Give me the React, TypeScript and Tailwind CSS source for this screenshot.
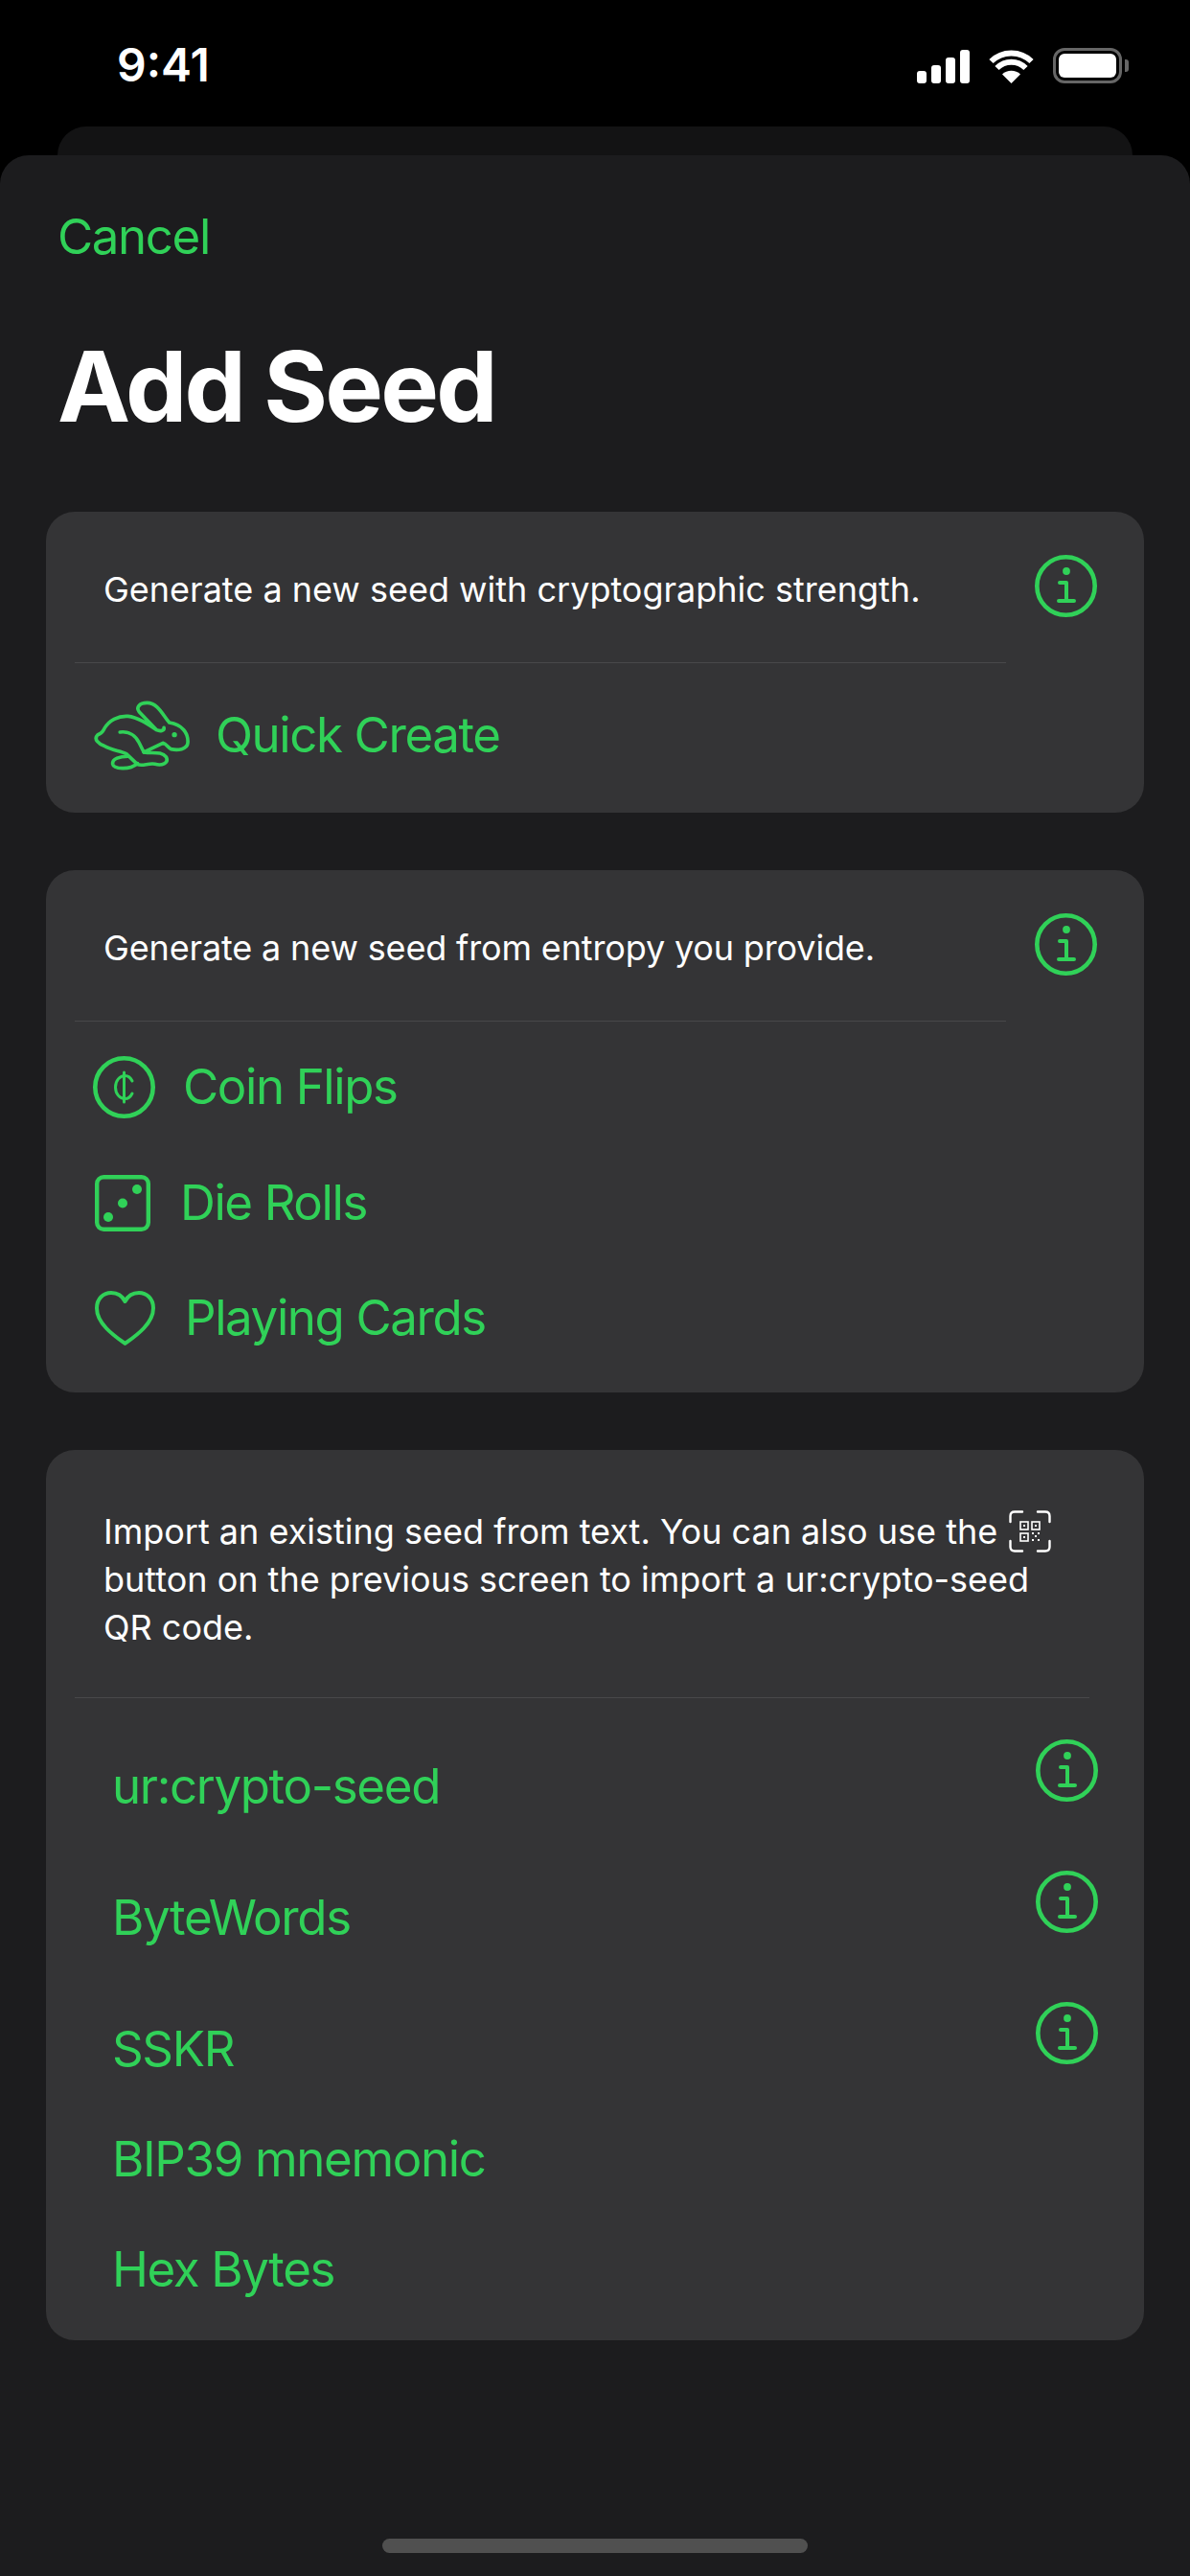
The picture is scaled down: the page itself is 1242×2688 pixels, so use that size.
function InfoIcon({ className = '' }: { className?: string }) {
  return (
    <svg viewBox="0 0 65 65" className={`w-[65px] h-[65px] shrink-0 ${className}`} fill="none" stroke="#30d158">
      <circle cx="32.5" cy="32.5" r="30.2" strokeWidth="4.6" />
      <circle cx="33" cy="17" r="3.9" fill="#30d158" stroke="none" />
      <path d="M26 29H33V48M25 48H41" strokeWidth="4" strokeLinecap="round" strokeLinejoin="round" />
    </svg>
  )
}

function RabbitIcon() {
  return (
    <svg viewBox="105 140 310 225" className="w-[103px] h-[75px] shrink-0" fill="none" stroke="#30d158" strokeWidth="11" strokeLinejoin="round" strokeLinecap="round">
      <path d="M328 228C330 238 316 240 305 235L250 178C240 165 250 150 275 150C310 150 325 190 345 212C385 218 405 245 403 275C402 297 370 300 350 295C340 290 335 278 325 276L265 305C290 310 320 300 335 320C345 340 320 348 300 342C280 338 260 350 245 343L210 310C190 300 165 300 140 285C125 280 105 265 120 250C135 245 135 240 140 232C155 205 185 190 215 192C245 195 275 215 305 235" />
      <path d="M190 242C220 238 240 255 250 275L265 305" />
      <path d="M215 318C190 318 165 325 167 342C170 358 220 362 245 340" />
      <circle cx="361" cy="250" r="8" fill="#30d158" stroke="none" />
    </svg>
  )
}

function CoinIcon() {
  return (
    <svg viewBox="0 0 65 65" className="w-[65px] h-[65px] shrink-0" fill="none" stroke="#30d158">
      <circle cx="32.5" cy="32.5" r="30.2" strokeWidth="4.6" />
      <path d="M41 26C39 22 36 20.500 33.500 20.500C28 20.500 23.500 25.500 23.500 32.500C23.500 39.500 28 44.500 33.500 44.500C36 44.500 39 43 41 39" strokeWidth="3" strokeLinecap="round" />
      <path d="M32.500 17V48" strokeWidth="3" strokeLinecap="round" />
    </svg>
  )
}

function DieIcon() {
  return (
    <svg viewBox="0 0 58 59" className="w-[58px] h-[59px] shrink-0" fill="none">
      <rect x="2.200" y="2.200" width="53.600" height="54.600" rx="7" stroke="#30d158" strokeWidth="4.400" />
      <circle cx="14" cy="44" r="5" fill="#30d158" />
      <circle cx="29" cy="29.500" r="5" fill="#30d158" />
      <circle cx="44" cy="15" r="5" fill="#30d158" />
    </svg>
  )
}

function HeartIcon() {
  return (
    <svg viewBox="0 0 63 58" className="w-[63px] h-[58px] shrink-0" fill="none">
      <path d="M31.500 55C22 48 2 35 2 18C2 8 9 2 17 2C24 2 29 6 31.500 11C34 6 39 2 46 2C54 2 61 8 61 18C61 35 41 48 31.500 55Z" stroke="#30d158" strokeWidth="4" strokeLinejoin="round" />
    </svg>
  )
}

function QrIcon() {
  return (
    <svg viewBox="0 0 44 44" className="inline-block w-[44px] h-[44px] align-[-9px] ml-[12px]" fill="none" stroke="#ffffff">
      <path d="M1.500 12V6C1.500 3 3 1.500 6 1.500H14M30 1.500H38C41 1.500 42.500 3 42.500 6V12M42.500 32V38C42.500 41 41 42.500 38 42.500H30M14 42.500H6C3 42.500 1.500 41 1.500 38V32" strokeWidth="2.400" strokeLinecap="round" />
      <rect x="12" y="12" width="8" height="8" strokeWidth="1.600" />
      <rect x="24" y="12" width="8" height="8" strokeWidth="1.600" />
      <rect x="12" y="24" width="8" height="8" strokeWidth="1.600" />
      <path d="M15 15h2v2h-2zM27 15h2v2h-2zM15 27h2v2h-2zM24 23h2v2h-2zM30 23h2v2h-2zM27 26h2v2h-2zM24 30h2v2h-2zM30 30h2v2h-2z" fill="#ffffff" stroke="none" />
    </svg>
  )
}

function StatusIcons() {
  return (
    <div className="flex items-end">
      <div className="flex items-end gap-[5px]">
        <div className="w-[10px] h-[13px] rounded-[3px] bg-white" />
        <div className="w-[10px] h-[19px] rounded-[3px] bg-white" />
        <div className="w-[10px] h-[27px] rounded-[3px] bg-white" />
        <div className="w-[10px] h-[35px] rounded-[3px] bg-white" />
      </div>
      <svg viewBox="0 0 47 35" className="w-[47px] h-[35px] ml-[20px]" fill="none" stroke="#ffffff">
        <path d="M23.500 35L14 25.500C19 20.500 28 20.500 33 25.500Z" fill="#ffffff" stroke="none" />
        <path d="M8.500 19C17 10.500 30 10.500 38.500 19" strokeWidth="6" />
        <path d="M2.500 12C14 .5 33 .5 44.500 12" strokeWidth="6" />
      </svg>
      <div className="flex items-center ml-[20px]">
        <div className="w-[72px] h-[37px] rounded-[12px] border-[3px] border-[#666666] p-[3px]">
          <div className="w-full h-full rounded-[6px] bg-white" />
        </div>
        <div className="w-[4px] h-[13px] ml-[3px] rounded-r-[3px] bg-[#666666]" />
      </div>
    </div>
  )
}

function Divider({ className = '' }: { className?: string }) {
  return <div className={`h-[1px] bg-[#48484a] ${className}`} />
}

function Action({ icon, label, gap, h, pl }: { icon: React.ReactNode; label: string; gap: string; h: string; pl: string }) {
  return (
    <div className={`flex items-center ${gap} ${h} ${pl}`}>
      {icon}
      <span className="text-[51px] leading-none tracking-[-1.4px] text-[#30d158] -translate-y-[1px]">{label}</span>
    </div>
  )
}

function ImportRow({ label, h, info = false }: { label: string; h: string; info?: boolean }) {
  return (
    <div className={`flex justify-between items-start pl-[69px] pr-[48px] ${h}`}>
      <span className="text-[51px] leading-[60px] tracking-[-1.35px] text-[#30d158]">{label}</span>
      {info && <InfoIcon className="-mt-[19px]" />}
    </div>
  )
}

export default function App() {
  return (
    <div className="w-[1242px] h-[2688px] bg-black flex flex-col overflow-hidden font-['Inter',sans-serif] text-white">
      <div className="h-[132px] shrink-0 flex justify-between items-start pt-[50px] pl-[122px] pr-[64px]">
        <span className="text-[48px] leading-[36px] font-semibold">9:41</span>
        <StatusIcons />
      </div>
      <div className="h-[30px] shrink-0 mx-[60px] rounded-t-[30px] bg-[#131314]" />
      <div className="flex-1 flex flex-col bg-[#1c1c1e] rounded-t-[30px] px-[48px]">
        <div className="pl-[12px] pt-[54px] text-[51px] leading-[62px] tracking-[-1.4px] text-[#30d158]">Cancel</div>
        <h1 className="pl-[12px] mt-[63px] text-[102px] leading-[124px] tracking-[-2.8px] font-bold">Add Seed</h1>

        <section className="mt-[69px] h-[314px] rounded-[30px] bg-[#343436] overflow-hidden">
          <div className="flex">
            <div className="w-[972px] ml-[30px]">
              <p className="h-[157px] pt-[56px] pl-[30px] text-[36px] leading-[50px]">Generate a new seed with cryptographic strength.</p>
              <Divider />
            </div>
            <InfoIcon className="mt-[45px] ml-[30px]" />
          </div>
          <Action icon={<RabbitIcon />} label="Quick Create" gap="gap-[25px]" h="h-[150px]" pl="pl-[49px]" />
        </section>

        <section className="mt-[60px] h-[545px] rounded-[30px] bg-[#343436] overflow-hidden">
          <div className="flex">
            <div className="w-[972px] ml-[30px]">
              <p className="h-[157px] pt-[56px] pl-[30px] text-[36px] leading-[50px] tracking-[-0.15px]">Generate a new seed from entropy you provide.</p>
              <Divider />
            </div>
            <InfoIcon className="mt-[45px] ml-[30px]" />
          </div>
          <Action icon={<CoinIcon />} label="Coin Flips" gap="gap-[29px]" h="h-[122px] mt-[7px]" pl="pl-[49px]" />
          <Action icon={<DieIcon />} label="Die Rolls" gap="gap-[31px]" h="h-[121px]" pl="pl-[51px]" />
          <Action icon={<HeartIcon />} label="Playing Cards" gap="gap-[31px]" h="h-[119px]" pl="pl-[51px]" />
        </section>

        <section className="mt-[60px] h-[929px] rounded-[30px] bg-[#343436] overflow-hidden">
          <p className="pt-[60px] px-[60px] text-[36px] leading-[50px]">
            Import an existing seed from text. You can also use the
            <QrIcon /> button on the previous screen to import a ur:crypto-seed QR code.
          </p>
          <Divider className="mt-[48px] ml-[30px] w-[1059px]" />
          <div className="pt-[62px]">
            <ImportRow label="ur:crypto-seed" h="h-[137px]" info />
            <ImportRow label="ByteWords" h="h-[137px]" info />
            <ImportRow label="SSKR" h="h-[115px]" info />
            <ImportRow label="BIP39 mnemonic" h="h-[115px]" />
            <ImportRow label="Hex Bytes" h="h-[60px]" />
          </div>
        </section>

        <div className="mt-auto mb-[24px] mx-auto w-[444px] h-[15px] rounded-full bg-[#505050]" />
      </div>
    </div>
  )
}
